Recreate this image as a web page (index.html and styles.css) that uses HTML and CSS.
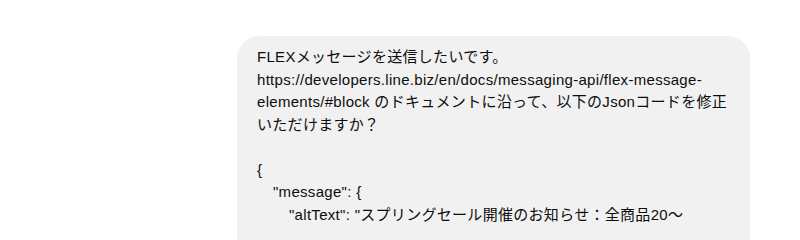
FILE: index.html
```html
<!DOCTYPE html>
<html lang="ja">
<head>
<meta charset="utf-8">
<title>Chat</title>
<link rel="stylesheet" href="styles.css">
</head>
<body>
<main class="thread">
  <div class="bubble">
    <div class="message">FLEXメッセージを送信したいです。
https://developers.line.biz/en/docs/messaging-api/flex-message-
elements/#block のドキュメントに沿って、以下のJsonコードを修正
いただけますか？

{
	"message": {
		"altText": "スプリングセール開催のお知らせ：全商品20～</div>
  </div>
</main>
</body>
</html>
```

FILE: styles.css
```css
html, body {
  margin: 0;
  padding: 0;
  height: 100%;
  background: #ffffff;
}

body {
  font-family: "Liberation Sans", "Noto Sans CJK JP", sans-serif;
  color: #0d0d0d;
  overflow: hidden;
}

.thread {
  box-sizing: border-box;
  height: 100%;
  display: flex;
  justify-content: flex-end;
  align-items: stretch;
  padding: 36px 50px 0 0;
  overflow: hidden;
}

.bubble {
  box-sizing: border-box;
  width: 513px;
  background: #f1f1f1;
  border-radius: 22px 22px 0 0;
  padding: 10px 20px 0;
  overflow: hidden;
}

.message {
  font-size: 15px;
  line-height: 22.5px;
  letter-spacing: 0.3px;
  white-space: pre;
  tab-size: 16px;
}
```
